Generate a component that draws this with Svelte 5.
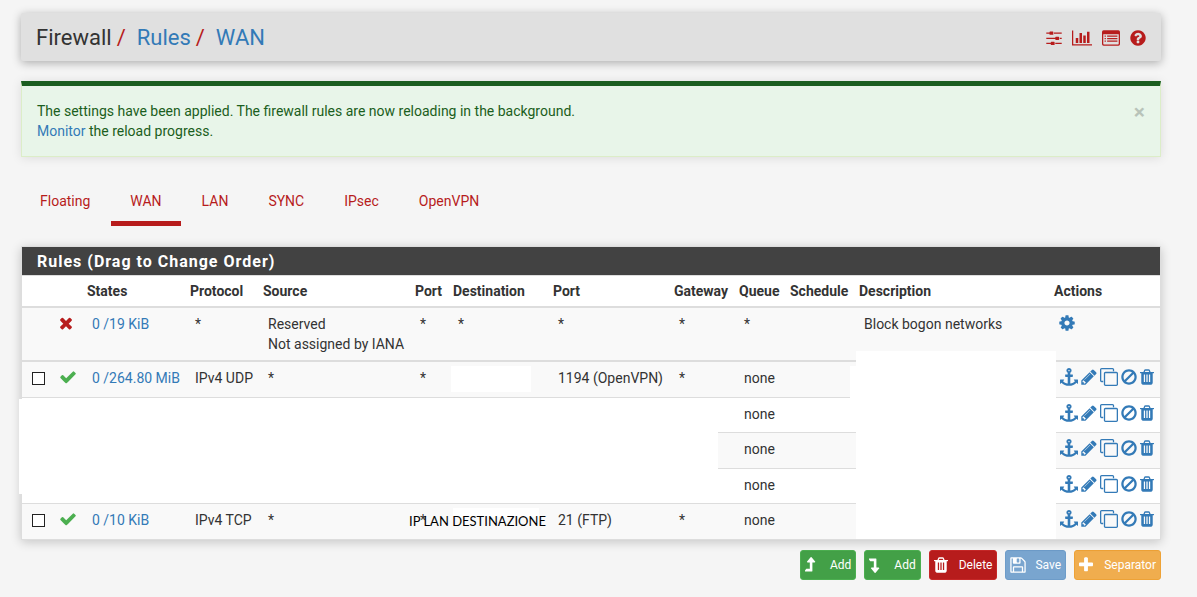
<script>
  const icons = {
    sliders: { w: 16, box: '128 0 1536 1792', d: 'M128 352h320v128h-320zM896 352h768v128h-768zM512 256h256q64 0 64 64v192q0 64-64 64h-256q-64 0-64-64v-192q0-64 64-64zM128 864h896v128h-896zM1472 864h192v128h-192zM1088 768h256q64 0 64 64v192q0 64-64 64h-256q-64 0-64-64v-192q0-64 64-64zM128 1376h448v128h-448zM1024 1376h640v128h-640zM640 1280h256q64 0 64 64v192q0 64-64 64h-256q-64 0-64-64v-192q0-64 64-64z' },
    chart: { w: 20, box: '0 0 2048 1792', d: 'M0 128h128v1408h1920v128h-2048zM384 896h256v512h-256zM768 384h256v1024h-256zM1152 640h256v768h-256zM1536 256h256v1152h-256z' },
    list: { w: 18, box: '0 0 1792 1792', d: 'M160 128h1472q160 0 160 160v1216q0 160-160 160h-1472q-160 0-160-160v-1216q0-160 160-160zM128 512v960q0 64 64 64h1408q64 0 64-64v-960zM256 640h128v128h-128zM512 640h1024v128h-1024zM256 896h128v128h-128zM512 896h1024v128h-1024zM256 1152h128v128h-128zM512 1152h1024v128h-1024z' },
    help: { w: 16, box: '128 0 1536 1792', d: 'M1024 1376v-192q0-14-9-23t-23-9h-192q-14 0-23 9t-9 23v192q0 14 9 23t23 9h192q14 0 23-9t9-23zm256-672q0-88-55.5-163t-138.5-116-170-41q-243 0-371 213-15 24 8 42l132 100q7 6 19 6 16 0 25-12 53-68 86-92 34-24 86-24 48 0 85.5 26t37.5 59q0 38-20 61t-68 45q-63 28-115.5 86.5t-52.5 125.5v36q0 14 9 23t23 9h192q14 0 23-9t9-23q0-19 21.5-49.5t54.5-49.5q32-18 49-28.5t46-35 44.5-48 28-60.5 12.5-81zm384 192q0 209-103 385.5t-279.5 279.5-385.5 103-385.5-103-279.5-279.5-103-385.5 103-385.5 279.5-279.5 385.5-103 385.5 103 279.5 279.5 103 385.5z' },
    times: { w: 14, box: '192 0 1408 1792', d: 'M1490 1322q0 40-28 68l-136 136q-28 28-68 28t-68-28l-294-294-294 294q-28 28-68 28t-68-28l-136-136q-28-28-28-68t28-68l294-294-294-294q-28-28-28-68t28-68l136-136q28-28 68-28t68 28l294 294 294-294q28-28 68-28t68 28l136 136q28 28 28 68t-28 68l-294 294 294 294q28 28 28 68z' },
    check: { w: 18, box: '0 0 1792 1792', d: 'M1671 566q0 40-28 68l-724 724-136 136q-28 28-68 28t-68-28l-136-136-362-362q-28-28-28-68t28-68l136-136q28-28 68-28t68 28l294 295 656-657q28-28 68-28t68 28l136 136q28 28 28 68z' },
    cog: { w: 16, box: '128 0 1536 1792', d: 'M1152 896q0-106-75-181t-181-75-181 75-75 181 75 181 181 75 181-75 75-181zm512-109v222q0 12-8 23t-20 13l-185 28q-19 54-39 91 35 50 107 138 10 12 10 25t-9 23q-27 37-99 108t-94 71q-12 0-26-9l-138-108q-44 23-91 38-16 136-29 186-7 28-36 28h-222q-14 0-24.5-8.5t-11.5-21.5l-28-184q-49-16-90-37l-141 107q-10 9-25 9-14 0-25-11-126-114-165-168-7-10-7-23 0-12 8-23 15-21 51-66.5t54-70.5q-27-50-41-99l-183-27q-13-2-21-12.5t-8-23.5v-222q0-12 8-23t19-13l186-28q14-46 39-92-40-57-107-138-10-12-10-24 0-10 9-23 26-36 98.5-107.5t94.5-71.5q13 0 26 10l138 107q44-23 91-38 16-136 29-186 7-28 36-28h222q14 0 24.5 8.5t11.5 21.5l28 184q49 16 90 37l142-107q9-9 24-9 13 0 25 10 129 119 165 170 7 8 7 22 0 12-8 23-15 21-51 66.5t-54 70.5q26 50 41 98l183 28q13 2 21 12.5t8 23.5z' },
    anchor: { w: 18, box: '0 0 1792 1792', d: 'M960 256q0-26-19-45t-45-19-45 19-19 45 19 45 45 19 45-19 19-45zm832 928v352q0 22-20 30-8 2-12 2-12 0-23-9l-93-93q-119 143-318.5 226.5t-429.5 83.5-429.5-83.5-318.5-226.5l-93 93q-9 9-23 9-4 0-12-2-20-8-20-30v-352q0-14 9-23t23-9h352q22 0 30 20 8 19-7 35l-100 100q67 91 189.5 153.5t271.5 82.5v-647h-192q-26 0-45-19t-19-45v-128q0-26 19-45t45-19h192v-163q-58-34-93-92.5t-35-128.5q0-106 75-181t181-75 181 75 75 181q0 70-35 128.5t-93 92.5v163h192q26 0 45 19t19 45v128q0 26-19 45t-45 19h-192v647q149-20 271.5-82.5t189.5-153.5l-100-100q-15-16-7-35 8-20 30-20h352q14 0 23 9t9 23z' },
    pencil: { w: 16, box: '128 0 1536 1792', d: 'M491 1536l91-91-235-235-91 91v107h128v128h107zm523-928q0-22-22-22-10 0-17 7l-542 542q-7 7-7 17 0 22 22 22 10 0 17-7l542-542q7-7 7-17zm-54-192l416 416-832 832h-416v-416zm683 96q0 53-37 90l-166 166-416-416 166-165q36-38 90-38 53 0 91 38l235 234q37 39 37 91z' },
    clone: { w: 18, box: '0 0 1792 1792', d: 'M1664 1632v-1088q0-13-9.5-22.5t-22.5-9.5h-1088q-13 0-22.5 9.5t-9.5 22.5v1088q0 13 9.5 22.5t22.5 9.5h1088q13 0 22.5-9.5t9.5-22.5zm128-1088v1088q0 66-47 113t-113 47h-1088q-66 0-113-47t-47-113v-1088q0-66 47-113t113-47h1088q66 0 113 47t47 113zm-384-384v160h-128v-160q0-13-9.5-22.5t-22.5-9.5h-1088q-13 0-22.5 9.5t-9.5 22.5v1088q0 13 9.5 22.5t22.5 9.5h160v128h-160q-66 0-113-47t-47-113v-1088q0-66 47-113t113-47h1088q66 0 113 47t47 113z' },
    ban: { w: 16, box: '128 0 1536 1792', d: 'M1440 893q0-161-87-295l-754 753q137 89 297 89 111 0 211.5-43.5t173.5-116.5 116-174.5 43-212.5zm-999 299l755-754q-135-91-300-91-148 0-273 73t-198 199-73 274q0 162 89 299zm1223-299q0 157-61 300t-163.5 246-245 164-298.5 61-298.5-61-245-164-163.5-246-61-300 61-299.5 163.5-245.5 245-164 298.5-61 298.5 61 245 164 163.5 245.5 61 299.5z' },
    trash: { w: 14, box: '192 0 1408 1792', d: 'M704 1376v-704q0-14-9-23t-23-9h-64q-14 0-23 9t-9 23v704q0 14 9 23t23 9h64q14 0 23-9t9-23zm256 0v-704q0-14-9-23t-23-9h-64q-14 0-23 9t-9 23v704q0 14 9 23t23 9h64q14 0 23-9t9-23zm256 0v-704q0-14-9-23t-23-9h-64q-14 0-23 9t-9 23v704q0 14 9 23t23 9h64q14 0 23-9t9-23zm-544-992h448l-48-117q-7-9-17-11h-317q-10 2-17 11zm928 32v64q0 14-9 23t-23 9h-96v948q0 83-47 143.5t-113 60.5h-832q-66 0-113-58.5t-47-141.5v-952h-96q-14 0-23-9t-9-23v-64q0-14 9-23t23-9h309l70-167q15-37 54-63t79-26h320q40 0 79 26t54 63l70 167h309q14 0 23 9t9 23z' },
    save: { w: 16, box: '128 0 1536 1792', d: 'M512 1536h768v-384h-768v384zm896 0h128v-896q0-14-10-38.5t-20-34.5l-281-281q-10-10-34-20t-39-10v416q0 40-28 68t-68 28h-576q-40 0-68-28t-28-68v-416h-128v1280h128v-416q0-40 28-68t68-28h832q40 0 68 28t28 68v416zm-384-928v-320q0-13-9.5-22.5t-22.5-9.5h-192q-13 0-22.5 9.5t-9.5 22.5v320q0 13 9.5 22.5t22.5 9.5h192q13 0 22.5-9.5t9.5-22.5zm640 32v928q0 40-28 68t-68 28h-1344q-40 0-68-28t-28-68v-1344q0-40 28-68t68-28h928q40 0 88 20t76 48l280 280q28 28 48 76t20 88z' },
    plus: { w: 14, box: '192 0 1408 1792', d: 'M1600 736v192q0 40-28 68t-68 28h-416v416q0 40-28 68t-68 28h-192q-40 0-68-28t-28-68v-416h-416q-40 0-68-28t-28-68v-192q0-40 28-68t68-28h416v-416q0-40 28-68t68-28h192q40 0 68 28t28 68v416h416q40 0 68 28t28 68z' },
    up: { w: 12, box: '0 0 1195 1792', d: 'M0 1536h704q32 0 32-32v-864h224q40 0 58-36 16-36-10-68l-352-416q-18-24-48-24t-48 24l-352 416q-26 32-10 68 18 36 58 36h224v640h-352q-14 0-24 12l-128 192q-18 26 24 52z' },
    down: { w: 12, box: '0 0 1195 1792', d: 'M0 256h704q32 0 32 32v864h224q40 0 58 36 16 36-10 68l-352 416q-18 24-48 24t-48-24l-352-416q-26-32-10-68 18-36 58-36h224v-640h-352q-14 0-24-12l-128-192q-18-26 24-52z' }
  };

  const tools = [['sliders', 'Settings'], ['chart', 'Graphs'], ['list', 'Logs'], ['help', 'Help']];
  const tabs = ['Floating', 'WAN', 'LAN', 'SYNC', 'IPsec', 'OpenVPN'];
  const widths = [27, 33, 103, 73, 152, 38, 100, 121, 65, 51, 69, 195, 111];
  const heads = ['', '', 'States', 'Protocol', 'Source', 'Port', 'Destination', 'Port', 'Gateway', 'Queue', 'Schedule', 'Description', 'Actions'];
  const actions = [['anchor', 'Anchor'], ['pencil', 'Edit'], ['clone', 'Copy'], ['ban', 'Disable'], ['trash', 'Delete']];
  const rules = [
    { states: '0 /264.80 MiB', cells: ['IPv4 UDP', '*', '*', '', '1194 (OpenVPN)', '*', 'none'] },
    { cells: ['', '', '', '', '', '', 'none'] },
    { cells: ['', '', '', '', '', '', 'none'] },
    { cells: ['', '', '', '', '', '', 'none'] },
    { states: '0 /10 KiB', cells: ['IPv4 TCP', '*', '*', '', '21 (FTP)', '*', 'none'], note: 'IP LAN DESTINAZIONE' }
  ];
  const buttons = [
    ['up', 'Add', 'success'],
    ['down', 'Add', 'success'],
    ['trash', 'Delete', 'danger'],
    ['save', 'Save', 'primary'],
    ['plus', 'Separator', 'warning']
  ];
</script>

{#snippet icon(name)}
  <svg width={icons[name].w} height="18" viewBox={icons[name].box} fill="currentColor" fill-rule="evenodd" aria-hidden="true">
    <path d={icons[name].d} />
  </svg>
{/snippet}

<main>
  <header>
    <h1>Firewall<i>/</i><a href="#rules">Rules</a><i>/</i><a href="#wan">WAN</a></h1>
    <nav class="tools">
      {#each tools as [name, label]}
        <a href={'#' + name} aria-label={label}>{@render icon(name)}</a>
      {/each}
    </nav>
  </header>

  <section class="alert">
    <p>The settings have been applied. The firewall rules are now reloading in the background.<br /><a href="#monitor">Monitor</a> the reload progress.</p>
    <button class="close" aria-label="Close">×</button>
  </section>

  <nav class="tabs">
    {#each tabs as tab}
      <a href={'#' + tab} class:active={tab === 'WAN'}>{tab}</a>
    {/each}
  </nav>

  <section class="panel">
    <h2>Rules (Drag to Change Order)</h2>
    <table>
      <colgroup>
        {#each widths as w}<col style:width="{w}px" />{/each}
      </colgroup>
      <thead>
        <tr>{#each heads as head}<th>{head}</th>{/each}</tr>
      </thead>
      <tbody>
        <tr class="odd">
          <td></td>
          <td class="block">{@render icon('times')}</td>
          <td><a href="#states">0 /19 KiB</a></td>
          <td>*</td>
          <td>Reserved<br />Not assigned by IANA</td>
          <td>*</td><td>*</td><td>*</td><td>*</td><td>*</td><td></td>
          <td>Block bogon networks</td>
          <td><a href="#settings" aria-label="Settings">{@render icon('cog')}</a></td>
        </tr>
      </tbody>
      <tbody class="rules">
        {#each rules as rule, i}
          <tr class:odd={i % 2 === 0}>
            <td>{#if rule.states}<input type="checkbox" aria-label="Select rule" />{/if}</td>
            <td class="pass">{#if rule.states}{@render icon('check')}{/if}</td>
            <td>{#if rule.states}<a href="#states">{rule.states}</a>{/if}</td>
            {#each rule.cells as cell, c}
              <td class:anchor={c === 3}>
                {cell}
                {#if c === 3 && rule.states}<span class="blank" class:short={rule.note}></span>{/if}
                {#if c === 3 && rule.note}<span class="note">{rule.note}</span>{/if}
              </td>
            {/each}
            <td></td>
            <td></td>
            <td>
              <div class="actions">
                {#each actions as [name, label]}
                  <a href={'#' + name} aria-label={label}>{@render icon(name)}</a>
                {/each}
              </div>
            </td>
          </tr>
        {/each}
      </tbody>
    </table>
    <div class="mask left"></div>
    <div class="mask right"></div>
    <div class="mask edge"></div>
  </section>

  <div class="buttons">
    {#each buttons as [name, label, kind]}
      <button class="btn {kind}"><span>{@render icon(name)}</span>{label}</button>
    {/each}
  </div>
</main>

<style>
  :global(body) {
    margin: 0;
    background: #f5f5f5;
  }
  main {
    padding: 13px 36px 17px 21px;
    font: 14px/20px Roboto, sans-serif;
    color: #333;
  }
  a {
    color: #337ab7;
    text-decoration: none;
  }
  svg {
    display: block;
  }
  header {
    display: flex;
    align-items: center;
    justify-content: space-between;
    padding: 13px 15px 11px;
    background: #e0e0e0;
    border-radius: 2px;
    box-shadow: 0 2px 10px rgba(0, 0, 0, 0.3);
  }
  h1 {
    margin: 0;
    font-size: 22px;
    line-height: 24px;
    font-weight: 400;
    color: #333;
  }
  h1 i {
    padding: 0 11px 0 5px;
    font-style: normal;
    color: #b71c1c;
  }
  .tools {
    display: flex;
    gap: 10px;
  }
  .tools a {
    color: #b71c1c;
  }
  .alert {
    display: flex;
    align-items: flex-start;
    justify-content: space-between;
    margin-top: 20px;
    padding: 15px;
    border: 1px solid #dcedc8;
    border-top: 5px solid #1b5e20;
    background: #e8f5e9;
    color: #1b5e20;
    box-shadow: 0 1px 10px rgba(0, 0, 0, 0.1);
  }
  .alert p {
    margin: 0;
  }
  .close {
    padding: 0;
    border: 0;
    background: none;
    font: 700 21px/22px Roboto, sans-serif;
    color: #000;
    opacity: 0.2;
  }
  .tabs {
    display: flex;
    gap: 2px;
    margin-top: 20px;
  }
  .tabs a {
    padding: 14px 19px 10px;
    border-bottom: 5px solid transparent;
    color: #b71c1c;
  }
  .tabs .active {
    border-color: #b71c1c;
  }
  .panel {
    position: relative;
    margin-top: 20px;
    border: 1px solid #ddd;
    background: #fff;
    box-shadow: 0 2px 10px rgba(0, 0, 0, 0.2);
  }
  h2 {
    margin: 0;
    padding: 5px 15px 3px;
    background: #424242;
    color: #fff;
    font-size: 16px;
    line-height: 20px;
    font-weight: 700;
    letter-spacing: 1px;
  }
  table {
    width: 100%;
    table-layout: fixed;
    border-collapse: separate;
    border-spacing: 0;
  }
  th {
    height: 30px;
    padding: 0 5px;
    border-top: 1px solid #ddd;
    border-bottom: 2px solid #ddd;
    text-align: left;
    font-weight: 700;
  }
  td {
    padding: 6px 0 6px 10px;
    vertical-align: top;
    white-space: nowrap;
  }
  .odd {
    background: #f9f9f9;
  }
  .rules td {
    height: 22px;
    border-top: 1px solid #ddd;
  }
  .rules .odd td {
    height: 23px;
  }
  .rules tr:first-child td {
    border-top-width: 2px;
  }
  .block {
    color: #b71c1c;
  }
  .pass {
    color: #4caf50;
  }
  input {
    display: block;
    appearance: none;
    width: 13px;
    height: 13px;
    margin: 4px 0 0;
    border: 1px solid #222;
    background: #fff;
  }
  .actions {
    display: flex;
    gap: 3px;
    padding-left: 1px;
  }
  .anchor {
    position: relative;
  }
  .blank {
    position: absolute;
    top: 4px;
    left: 3px;
    width: 80px;
    height: 26px;
    background: #fff;
  }
  .short {
    left: 5px;
    width: 86px;
    height: 9px;
  }
  .note {
    position: absolute;
    top: 7px;
    left: -39px;
    font-family: Lato, sans-serif;
    font-size: 13px;
    color: #000;
  }
  .mask {
    position: absolute;
    background: #fff;
  }
  .left {
    top: 152px;
    left: -3px;
    width: 699px;
    height: 95px;
  }
  .right {
    top: 104px;
    right: 104px;
    bottom: 0;
    width: 200px;
  }
  .edge {
    top: 119px;
    right: 304px;
    width: 6px;
    height: 33px;
  }
  .buttons {
    display: flex;
    justify-content: flex-end;
    gap: 8px;
    margin-top: 10px;
  }
  .btn {
    display: flex;
    align-items: center;
    height: 30px;
    padding: 0 4px;
    border: 1px solid;
    border-radius: 3px;
    font: 12px/18px Roboto, sans-serif;
    color: #fff;
  }
  .btn span {
    width: 25px;
  }
  .success {
    background: #43a047;
    border-color: #4caf50;
  }
  .danger {
    background: #b71c1c;
    border-color: #c62828;
  }
  .primary {
    background: #79a5cf;
    border-color: #6d9cc9;
  }
  .warning {
    background: #f0ad4e;
    border-color: #eea236;
  }
</style>
